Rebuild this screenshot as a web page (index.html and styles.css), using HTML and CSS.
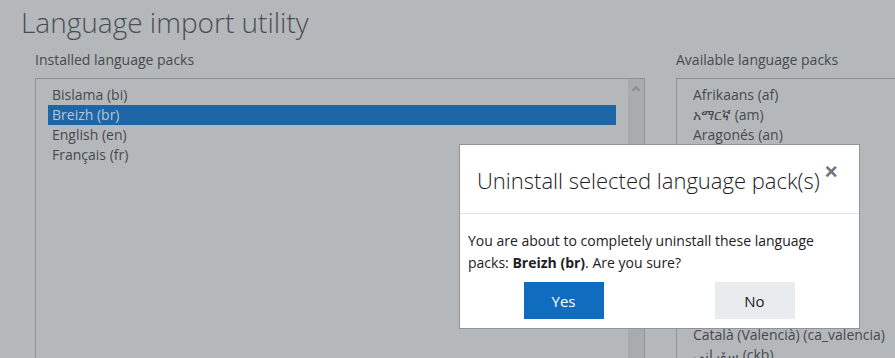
FILE: index.html
```html
<!DOCTYPE html>
<html lang="en">
<head>
  <meta charset="UTF-8">
  <title>Language import utility</title>
  <link rel="stylesheet" href="styles.css">
</head>
<body>

  <h1>Language import utility</h1>

  <div class="packs">
    <!-- Installed -->
    <div class="pack-col">
      <label class="pack-label">Installed language packs</label>
      <div class="listbox">
        <ul class="options">
          <li>Bislama (bi)</li>
          <li class="selected">Breizh (br)</li>
          <li>English (en)</li>
          <li>Français (fr)</li>
        </ul>
        <div class="scrollbar"><span class="arrow"></span></div>
      </div>
    </div>

    <!-- Available -->
    <div class="pack-col">
      <label class="pack-label">Available language packs</label>
      <div class="listbox">
        <ul class="options">
          <li>Afrikaans (af)</li>
          <li>አማርኛ (am)</li>
          <li>Aragonés (an)</li>
          <li>العربية (ar)</li>
          <li>Asturianu (ast)</li>
          <li>Azərbaycanca (az)</li>
          <li>Беларуская (be)</li>
          <li>Български (bg)</li>
          <li>Bamanankan (bm)</li>
          <li>বাংলা (bn)</li>
          <li>Bosanski (bs)</li>
          <li>Català (ca)</li>
          <li>Català (Valencià) (ca_valencia)</li>
          <li>سۆرانی (ckb)</li>
        </ul>
      </div>
    </div>
  </div>

  <!-- Confirm dialog -->
  <div class="modal">
    <div class="modal-header">
      <h5 class="modal-title">Uninstall selected language pack(s)</h5>
      <button class="close" aria-label="Close">&times;</button>
    </div>
    <div class="modal-body">
      <p>You are about to completely uninstall these language packs: <strong>Breizh (br)</strong>. Are you sure?</p>
      <div class="actions">
        <button class="btn btn-primary">Yes</button>
        <button class="btn btn-secondary">No</button>
      </div>
    </div>
  </div>

</body>
</html>
```

FILE: styles.css
```css
* {
  box-sizing: border-box;
}

body {
  margin: 0;
  padding: 0 0 0 21px;
  height: 100vh;
  overflow: hidden;
  font-family: 'Open Sans', 'Noto Sans', sans-serif;
  background: #b5b8bb;
  color: #45494e;
}

h1 {
  margin: 4px 0 10px;
  font-size: 28px;
  font-weight: 300;
  line-height: 36px;
  color: #4a4e53;
}

.packs {
  display: grid;
  grid-template-columns: 610px 610px;
  gap: 31px;
  padding-left: 14px;
}

.pack-label {
  display: block;
  font-size: 14px;
  line-height: 20px;
  margin-bottom: 8px;
}

.listbox {
  display: flex;
  height: 300px;
  border: 1px solid #8e9296;
}

.options {
  flex: 1;
  list-style: none;
  margin: 0;
  padding: 6px 12px 0 12px;
}

.options li {
  padding: 0 4px;
  font-size: 14px;
  line-height: 20px;
  white-space: nowrap;
}

.options li.selected {
  background: #1e66a5;
  color: #b8c7d8;
}

.scrollbar {
  width: 16px;
  background: #a9acaf;
  display: flex;
  justify-content: center;
  padding-top: 8px;
}

.arrow {
  width: 6px;
  height: 6px;
  border-left: 2px solid #8a8d90;
  border-top: 2px solid #8a8d90;
  transform: rotate(45deg);
}

.modal {
  position: fixed;
  left: 459px;
  top: 144px;
  width: 401px;
  height: 185px;
  background: #fff;
  border: 1px solid #919497;
  color: #1d2125;
}

.modal-header {
  display: flex;
  align-items: flex-start;
  height: 69px;
  padding: 19px 0 0 17px;
  border-bottom: 1px solid #dee2e6;
}

.modal-title {
  margin: 0;
  font-size: 22px;
  font-weight: 300;
  line-height: 32px;
}

.close {
  background: none;
  border: none;
  padding: 0 0 0 5px;
  font-size: 22px;
  font-weight: bold;
  line-height: 16px;
  color: #6f7377;
  cursor: pointer;
  font-family: 'Liberation Sans', sans-serif;
}

.modal-body {
  padding: 16px 9px 0 8px;
}

.modal-body p {
  margin: 0 0 8px;
  font-size: 14px;
  line-height: 22px;
}

.actions {
  display: flex;
  justify-content: space-around;
}

.btn {
  width: 80px;
  height: 37px;
  border: none;
  font-family: inherit;
  font-size: 15px;
  cursor: pointer;
}

.btn-primary {
  background: #0f6cbf;
  color: #fff;
}

.btn-secondary {
  background: #e9ecef;
  color: #1d2125;
}
```
